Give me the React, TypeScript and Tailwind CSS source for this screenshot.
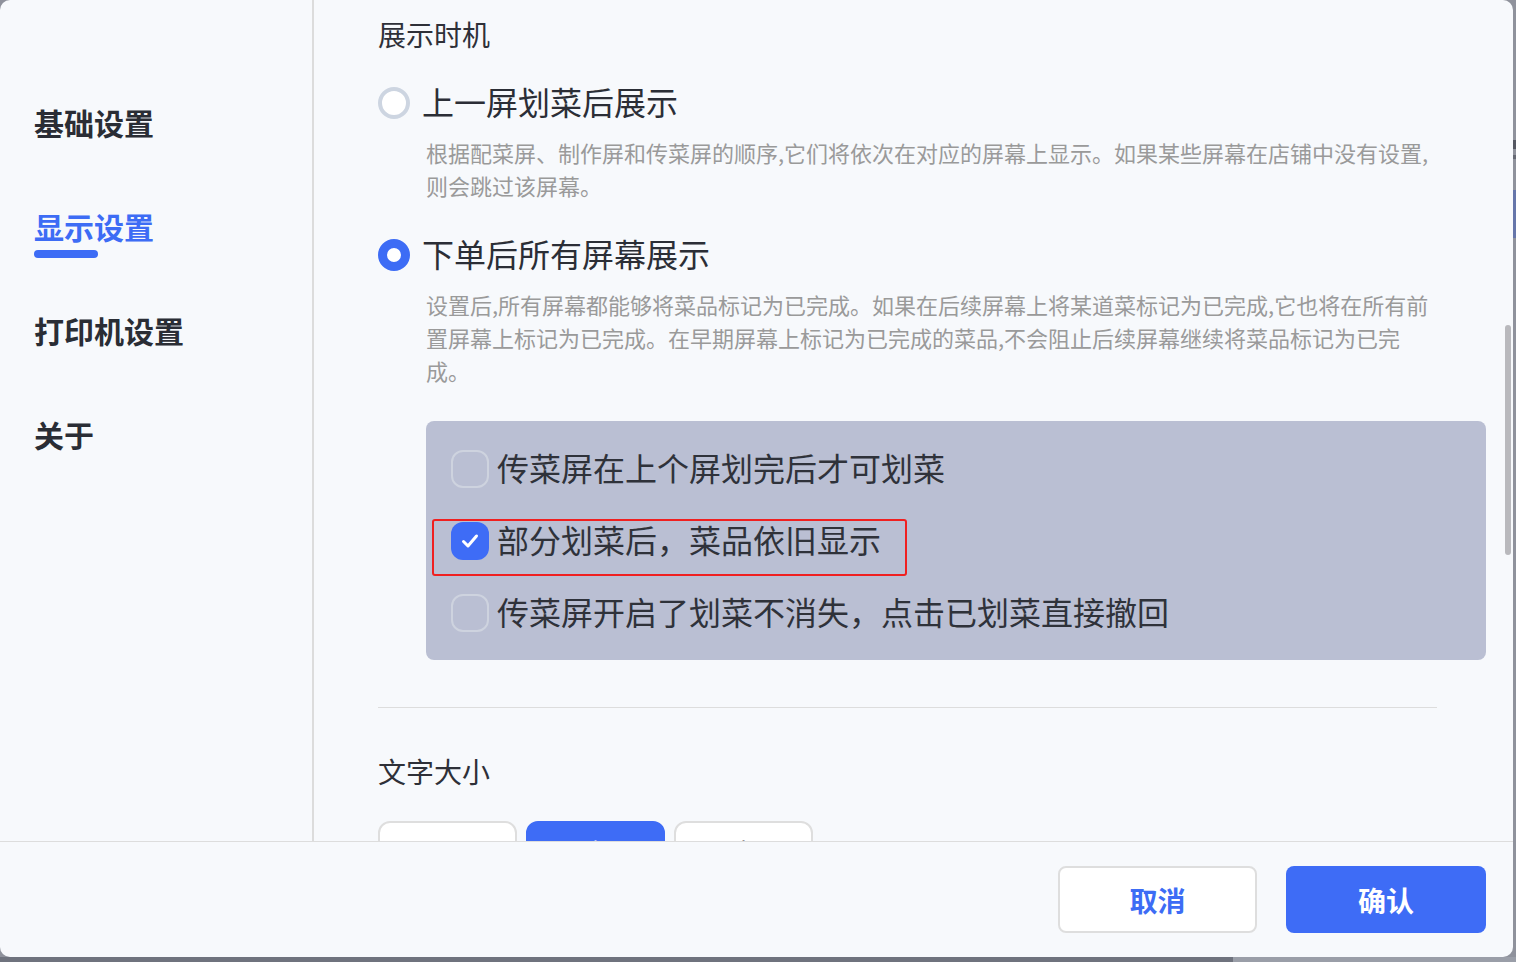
import React from 'react';

const navItems = ['基础设置', '显示设置', '打印机设置', '关于'];

const options = [
  { label: '传菜屏在上个屏划完后才可划菜', checked: false },
  { label: '部分划菜后，菜品依旧显示', checked: true },
  { label: '传菜屏开启了划菜不消失，点击已划菜直接撤回', checked: false },
];

function Check({ checked }: { checked: boolean }) {
  if (!checked) {
    return <div className="w-[38px] h-[38px] shrink-0 rounded-[12px] border-2 border-[#ced3df]" />;
  }
  return (
    <div className="w-[38px] h-[38px] shrink-0 rounded-[12px] bg-[#3e6cf6] flex items-center justify-center">
      <svg width="24" height="24" viewBox="0 0 24 24" fill="none">
        <path d="M5.5 12.5l4.5 4.5L18.5 7" stroke="white" strokeWidth="3" strokeLinecap="round" strokeLinejoin="round" />
      </svg>
    </div>
  );
}

export default function App() {
  return (
    <div className="w-[1516px] h-[962px] bg-[#8f929c] flex flex-col font-['Noto_Sans_CJK_SC',sans-serif] overflow-hidden">
      <div className="flex h-[957px]">
        <div className="w-[1513px] h-[957px] rounded-[10px] bg-[#f7f9fc] flex flex-col overflow-hidden">
          {/* body */}
          <div className="flex h-[841px]">
            <aside className="w-[314px] shrink-0 border-r-2 border-[#dcdcdc] pt-[102px] pl-[34px] flex flex-col gap-[64px]">
              {navItems.map((n, i) => (
                <div key={n} className="relative">
                  <span className={`text-[30px] leading-[40px] font-bold ${i === 1 ? 'text-[#3d6cf5]' : 'text-[#2a2d35]'}`}>{n}</span>
                  {i === 1 && <div className="absolute left-0 top-[44px] w-[64px] h-[8px] rounded-full bg-[#3d6cf5]" />}
                </div>
              ))}
            </aside>

            <main className="relative flex-1 overflow-hidden pl-[64px] pr-[27px] pt-[14px]">
              <h2 className="text-[28px] leading-[40px] text-[#2e3038]">展示时机</h2>

              <div className="mt-[25px] h-[48px] flex items-center gap-[12px]">
                <div className="w-[32px] h-[32px] rounded-full border-[4px] border-[#cdd5e1] bg-white" />
                <span className="text-[32px] leading-[48px] pb-[4px] text-[#2b2e36]">上一屏划菜后展示</span>
              </div>
              <p className="ml-[48px] mt-[9px] w-[1011px] text-[22px] leading-[33px] text-[#9a9a9a]">
                根据配菜屏、制作屏和传菜屏的顺序,它们将依次在对应的屏幕上显示。如果某些屏幕在店铺中没有设置,则会跳过该屏幕。
              </p>

              <div className="mt-[29px] h-[48px] flex items-center gap-[12px]">
                <div className="w-[32px] h-[32px] rounded-full border-[9px] border-[#3d6cf5] bg-white" />
                <span className="text-[32px] leading-[48px] pb-[4px] text-[#2b2e36]">下单后所有屏幕展示</span>
              </div>
              <p className="ml-[48px] mt-[9px] w-[1011px] text-[22px] leading-[33px] text-[#9a9a9a]">
                设置后,所有屏幕都能够将菜品标记为已完成。如果在后续屏幕上将某道菜标记为已完成,它也将在所有前置屏幕上标记为已完成。在早期屏幕上标记为已完成的菜品,不会阻止后续屏幕继续将菜品标记为已完成。
              </p>

              <div className="relative ml-[48px] mt-[34px] h-[239px] rounded-[8px] bg-[#babfd3] pl-[25px] pt-[20px] flex flex-col gap-[16px]">
                {options.map((o) => (
                  <div key={o.label} className="h-[56px] flex items-center gap-[8px]">
                    <Check checked={o.checked} />
                    <span className="text-[32px] leading-[48px] pb-[4px] text-[#2f323a]">{o.label}</span>
                  </div>
                ))}
                <div className="absolute left-[6px] top-[98px] w-[475px] h-[57px] border-2 border-[#f02020] rounded-[3px]" />
              </div>

              <div className="mt-[47px] w-[1059px] h-px bg-[#dddddd]" />

              <h2 className="mt-[43px] text-[28px] leading-[40px] text-[#2e3038]">文字大小</h2>

              <div className="mt-[30px] flex gap-[9px]">
                <div className="w-[139px] h-[60px] rounded-[12px] border-2 border-[#dedede] bg-white flex items-center justify-center text-[24px] text-[#2e3038]">小</div>
                <div className="w-[139px] h-[60px] rounded-[12px] border-2 border-[#3e6cf6] bg-[#3e6cf6] flex items-center justify-center text-[24px] text-white">中</div>
                <div className="w-[139px] h-[60px] rounded-[12px] border-2 border-[#dedede] bg-white flex items-center justify-center text-[24px] text-[#2e3038]">大</div>
              </div>

              <div className="absolute right-[2px] top-[325px] w-[6px] h-[230px] rounded-full bg-[#b9b9bd]" />
            </main>
          </div>

          {/* footer */}
          <footer className="flex-1 border-t border-[#dddddd] flex items-center justify-end gap-[29px] pr-[27px]">
            <button className="w-[199px] h-[67px] rounded-[8px] border-2 border-[#dedede] bg-white text-[28px] font-bold text-[#3d6cf5]">取消</button>
            <button className="w-[200px] h-[67px] rounded-[8px] bg-[#3e6cf6] text-[28px] font-bold text-white">确认</button>
          </footer>
        </div>

        {/* backdrop sliver */}
        <div className="w-[3px] flex flex-col">
          <div className="h-[140px]" />
          <div className="h-[9px] bg-[#555862]" />
          <div className="h-[6px]" />
          <div className="h-[4px] bg-[#666974]" />
          <div className="h-[31px]" />
          <div className="h-[48px] bg-[#6676aa]" />
        </div>
      </div>
      <div className="flex flex-1">
        <div className="w-[1233px] bg-[#6f737e]" />
        <div className="flex-1 bg-[#9a9ea8]" />
      </div>
    </div>
  );
}
